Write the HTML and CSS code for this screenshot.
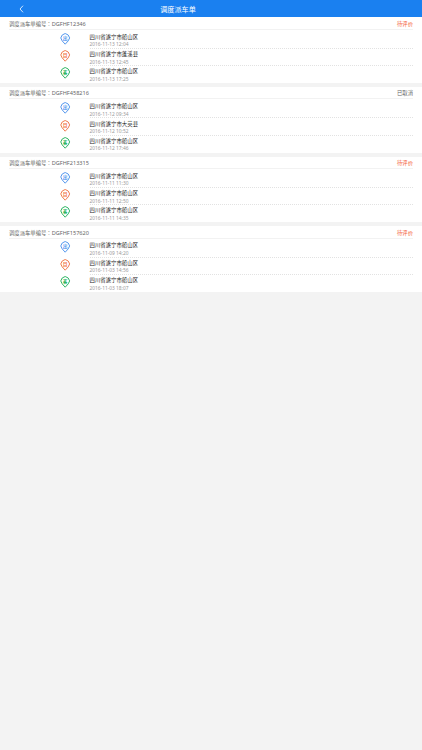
FILE: index.html
```
<!DOCTYPE html>
<html>
	<head>
		<meta charset="utf-8">
		<title>调度派车单</title>
		<link rel="stylesheet" href="styles.css">
		<script src="index.js"></script>
	</head>
	<body>
		<div class="header">
			<a href="javascript:;" class="back">
				<svg viewBox="0 0 5 8"><path d="M4 .7L1 4l3 3.3"/></svg>
			</a>
			<h1>调度派车单</h1>
		</div>
		<div class="main" id="list"></div>
	</body>
</html>
```

FILE: styles.css
```
*{ margin: 0; padding: 0; text-decoration: none; list-style-type: none; box-sizing: border-box; }
body{ background-color: #f3f3f3; font-family: "Noto Sans","Noto Sans CJK SC",sans-serif; color: #333; }
.header{ height: 17.4px; background-color: #1a80f0; color: #fff; display: flex; align-items: center; padding: 0 19px; }
.header .back{ width: 5px; height: 8px; }
.header .back svg{ display: block; width: 5px; height: 8px; fill: none; stroke: #fff; stroke-width: .8; }
.header h1{ flex: 1; padding: 1px 71px 0 0; text-align: center; font-size: 7.1px; line-height: 17px; font-weight: normal; }
/*派车单*/
.order{ height: 65.6px; margin-bottom: 4px; background-color: #fff; }
.order_top{ display: flex; justify-content: space-between; height: 12.5px; line-height: 12px; padding-top: .5px; margin: 0 9px 1.5px; border-bottom: 1px solid #f2f2f2; font-size: 5.33px; color: #666; }
.order_top b{ font-weight: normal; font-family: "Noto Sans CJK TC",sans-serif; }
.order_top i{ font-style: normal; font-size: 5.6px; }
.order_top .wait{ color: #f4623a; }
.order_top .cancel{ color: #666; }
.order li{ display: flex; height: 17.33px; padding-left: 60px; }
.order .pin{ width: 10.5px; height: 12px; margin-top: 1.2px; flex: none; }
.pin path{ fill: #fff; stroke: currentColor; stroke-width: 1; }
.pin text{ fill: currentColor; font-size: 4.8px; font-weight: bold; text-anchor: middle; }
.start{ color: #5598ee; }
.goal{ color: #f07b4e; }
.guest{ color: #2fb563; }
.order .place{ flex: 1; margin: 0 9px 0 19px; padding-top: 2.2px; border-bottom: 1px dotted #e2e2e2; }
.order li:last-child .place{ border-bottom: none; }
.place p{ font-size: 5.4px; line-height: 7.6px; color: #222; }
.place span{ display: block; font-size: 4.85px; line-height: 6.4px; color: #999; }
```

FILE: index.js
```
window.onload = function(){
	var orders = [
		{ no: 'DGFHF12346', state: 'wait', stops: [['四川省遂宁市船山区','2016-11-13 12:04'],['四川省遂宁市蓬溪县','2016-11-13 12:45'],['四川省遂宁市船山区','2016-11-13 17:25']] },
		{ no: 'DGFHF458216', state: 'cancel', stops: [['四川省遂宁市船山区','2016-11-12 09:34'],['四川省遂宁市大英县','2016-11-12 10:52'],['四川省遂宁市船山区','2016-11-12 17:46']] },
		{ no: 'DGFHF213315', state: 'wait', stops: [['四川省遂宁市船山区','2016-11-11 11:30'],['四川省遂宁市船山区','2016-11-11 12:50'],['四川省遂宁市船山区','2016-11-11 14:35']] },
		{ no: 'DGFHF157620', state: 'wait', stops: [['四川省遂宁市船山区','2016-11-09 14:20'],['四川省遂宁市船山区','2016-11-03 14:56'],['四川省遂宁市船山区','2016-11-03 18:07']] }
	];
	var states = { wait: '待评价', cancel: '已取消' };
	//出发、目的、乘客
	var pins = [['start','出'],['goal','目'],['guest','客']];
	var html = '';
	orders.forEach(function(order){
		html += '<div class="order"><div class="order_top"><p>调度派车单编号<b>：</b><i>' + order.no + '</i></p><span class="' + order.state + '">' + states[order.state] + '</span></div><ul>';
		order.stops.forEach(function(stop,i){
			html += '<li><svg class="pin ' + pins[i][0] + '" viewBox="0 0 10.5 12">'
				+ '<path d="M5.2 11.2L2.2 7.9A4.2 4.2 0 1 1 8.2 7.9Z"/>'
				+ '<text x="5.2" y="6.7">' + pins[i][1] + '</text></svg>'
				+ '<div class="place"><p>' + stop[0] + '</p><span>' + stop[1] + '</span></div></li>';
		});
		html += '</ul></div>';
	});
	document.getElementById('list').innerHTML = html;
}
```
